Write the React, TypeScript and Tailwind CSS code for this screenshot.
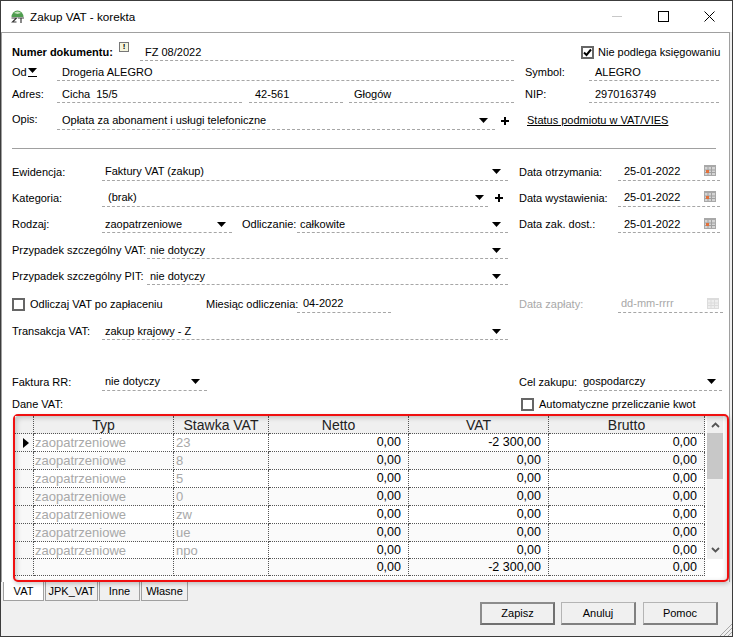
import React from "react";

const Arrow = ({ className = "" }: { className?: string }) => (
  <svg width="9" height="5" viewBox="0 0 9 5" className={"shrink-0 " + className}>
    <path d="M0 0H9L4.5 5Z" fill="#000" />
  </svg>
);

const Plus = () => (
  <svg width="8" height="8" viewBox="0 0 8 8" className="shrink-0">
    <path d="M3 0H5V3H8V5H5V8H3V5H0V3H3Z" fill="#000" />
  </svg>
);

const Cal = ({ off = false }: { off?: boolean }) => (
  <svg width="12" height="11" viewBox="0 0 12 11" className="shrink-0">
    <rect width="12" height="11" fill={off ? "#dcdcdc" : "#a8a8a8"} />
    <rect x="1" y="2" width="10" height="8" fill={off ? "#eeeeee" : "#d4d4d4"} />
    <path d="M1 5H11M1 7.5H11M4 2V10M7.5 2V10" stroke={off ? "#dcdcdc" : "#a0a0a0"} strokeWidth="1" />
    {!off && <rect x="2" y="5" width="3" height="3" fill="#e2703a" />}
  </svg>
);

const Check = ({ on = false }: { on?: boolean }) => (
  <span className="w-[13px] h-[13px] border-2 border-[#666666] bg-white flex items-center justify-center shrink-0">
    {on && (
      <svg width="9" height="9" viewBox="0 0 9 9">
        <path d="M1 4.5L3.5 7L8 1.5" stroke="#000" strokeWidth="2" fill="none" />
      </svg>
    )}
  </span>
);

const Field = ({
  w,
  children,
  arrow,
  pl = 0,
  mr = 7,
  cls = "",
  extra,
}: {
  w: number;
  children?: React.ReactNode;
  arrow?: boolean;
  pl?: number;
  mr?: number;
  cls?: string;
  extra?: React.ReactNode;
}) => (
  <div
    className={"relative self-stretch border-b border-dashed border-[#a6a6a6] flex items-center shrink-0 whitespace-pre " + cls}
    style={{ width: w, paddingLeft: pl }}
  >
    <span className="flex-1">{children}</span>
    {arrow && <Arrow />}
    {arrow && <span className="shrink-0" style={{ width: mr }} />}
    {extra}
  </div>
);

const DateCal = () => (
  <span className="absolute right-[4px] top-[2px]">
    <Cal />
  </span>
);

const Lbl = ({ w, children, cls = "" }: { w: number; children: React.ReactNode; cls?: string }) => (
  <span className={"shrink-0 whitespace-nowrap " + cls} style={{ width: w }}>
    {children}
  </span>
);

const rates = ["23", "8", "5", "0", "zw", "ue", "npo", ""];
const cols = "grid-cols-[19px_140px_95px_140px_140px_156px]";

const Row = ({ r, i }: { r: string; i: number }) => {
  const cell =
    "border-r border-b border-dotted border-[#555555] flex items-center " + (i >= 6 ? "h-[17px]" : "h-[18px]");
  const last = i === 7;
  return (
    <div className={"grid " + cols + " " + (i % 2 === 1 ? "bg-[#fafafa]" : "bg-white")}>
      <div className={cell + " justify-center pl-[3px] bg-[#f8f8f8]"}>
        {i === 0 && (
          <svg width="6" height="10" viewBox="0 0 6 10">
            <path d="M0 0L6 5L0 10Z" fill="#000" />
          </svg>
        )}
      </div>
      <div className={cell + " pl-[1px] text-[#a8a8a8] text-[13px]"}>{last ? "" : "zaopatrzeniowe"}</div>
      <div className={cell + " pl-[2px] text-[#a8a8a8] text-[13px]"}>{r}</div>
      <div className={cell + " justify-end pr-[7px]"}>0,00</div>
      <div className={cell + " justify-end pr-[7px]"}>{i === 0 || last ? "-2 300,00" : "0,00"}</div>
      <div className={cell + " justify-end pr-[7px]"}>0,00</div>
    </div>
  );
};

export default function App() {
  return (
    <div className="relative w-[733px] h-[637px] bg-[#f0f0f0] border border-[#3c3c3c] flex flex-col overflow-hidden text-[11px] leading-none text-black [font-family:'Liberation_Sans',sans-serif]">
      <div className="h-[31px] shrink-0 bg-white flex items-center pl-[9px] text-[11.7px]">
        <svg width="15" height="15" viewBox="0 0 15 15" className="shrink-0">
          <path d="M1.5 8A6 6.5 0 0 1 13.5 8Z" fill="#4f9d4f" />
          <path d="M4 4A4 3 0 0 1 11 4L7.5 5Z" fill="#c4e2bc" />
          <path d="M1.5 9H6.5L2.5 13H6.5M8 9H14M11 9V14" stroke="#3a3a3a" strokeWidth="1.2" fill="none" />
        </svg>
        <span className="ml-[5px]">Zakup VAT - korekta</span>
        <div className="ml-auto flex items-center">
          <div className="w-[46px] flex justify-center"><div className="w-[10px] h-px bg-[#c8c8c8]" /></div>
          <div className="w-[46px] flex justify-center"><div className="w-[11px] h-[11px] border border-black" /></div>
          <div className="w-[46px] flex justify-center">
            <svg width="11" height="11" viewBox="0 0 11 11"><path d="M.5.5L10.5 10.5M10.5.5L.5 10.5" stroke="#000" strokeWidth="1" /></svg>
          </div>
        </div>
      </div>

      <div className="h-[550px] w-[729px] shrink-0 bg-white border-t border-x border-[#a0a0a0] flex flex-col pl-[10px] pt-[11px]">
        <div className="flex h-[17px] items-center shrink-0">
          <span className="font-bold shrink-0 w-[107px] whitespace-nowrap">Numer dokumentu:</span>
          <span className="w-[10px] h-[10px] border border-[#777] bg-[#f4f4dc] text-[8px] font-bold flex items-center justify-center self-start -mt-[2px] shrink-0">!</span>
          <Field w={374} pl={5} cls="ml-[11px]">FZ 08/2022</Field>
          <div className="flex items-center gap-[4px] ml-[67px] whitespace-nowrap">
            <Check on />
            <span>Nie podlega księgowaniu</span>
          </div>
        </div>
        <div className="flex h-[17px] mt-[3px] items-center shrink-0">
          <span className="w-[45px] shrink-0 flex items-center">Od<span className="border-b border-black ml-px pb-[3px]"><Arrow /></span></span>
          <Field w={457} pl={5}>Drogeria ALEGRO</Field>
          <Lbl w={64} cls="ml-[11px]">Symbol:</Lbl>
          <Field w={130} pl={6}>ALEGRO</Field>
        </div>
        <div className="flex h-[17px] mt-[5px] items-center shrink-0">
          <Lbl w={45}>Adres:</Lbl>
          <Field w={185} pl={5}>{"Cicha  15/5"}</Field>
          <Field w={94} pl={6} cls="ml-[7px]">42-561</Field>
          <Field w={165} pl={5} cls="ml-[6px]">Głogów</Field>
          <Lbl w={64} cls="ml-[11px]">NIP:</Lbl>
          <Field w={130} pl={6}>2970163749</Field>
        </div>
        <div className="flex h-[19px] mt-[8px] items-center shrink-0">
          <Lbl w={45} cls="-mt-[3px]">Opis:</Lbl>
          <Field w={438} pl={5} arrow>Opłata za abonament i usługi telefoniczne</Field>
          <span className="ml-[6px] mr-[18px] flex"><Plus /></span>
          <span className="underline whitespace-nowrap">Status podmiotu w VAT/VIES</span>
        </div>
        <div className="h-px bg-[#a0a0a0] mt-[18px] w-[704px] shrink-0" />

        <div className="flex h-[18px] mt-[14px] items-center shrink-0">
          <Lbl w={90}>Ewidencja:</Lbl>
          <Field w={406} pl={3} arrow>Faktury VAT (zakup)</Field>
          <Lbl w={99} cls="ml-[11px]">Data otrzymania:</Lbl>
          <Field w={102} pl={6} extra={<DateCal />}>25-01-2022</Field>
        </div>
        <div className="flex h-[18px] mt-[8px] items-center shrink-0">
          <Lbl w={90}>Kategoria:</Lbl>
          <Field w={386} pl={6} arrow mr={4}>(brak)</Field>
          <span className="ml-[7px] mr-[16px] flex"><Plus /></span>
          <Lbl w={99}>Data wystawienia:</Lbl>
          <Field w={102} pl={6} extra={<DateCal />}>25-01-2022</Field>
        </div>
        <div className="flex h-[17px] mt-[9px] items-center shrink-0">
          <Lbl w={90}>Rodzaj:</Lbl>
          <Field w={130} pl={3} arrow mr={6}>zaopatrzeniowe</Field>
          <Lbl w={55} cls="ml-[10px]">Odliczanie:</Lbl>
          <Field w={211} pl={3} arrow>całkowite</Field>
          <Lbl w={99} cls="ml-[11px]">Data zak. dost.:</Lbl>
          <Field w={102} pl={6} extra={<DateCal />}>25-01-2022</Field>
        </div>
        <div className="flex h-[17px] mt-[9px] items-center shrink-0">
          <Lbl w={135}>Przypadek szczególny VAT:</Lbl>
          <Field w={361} pl={3} arrow>nie dotyczy</Field>
        </div>
        <div className="flex h-[17px] mt-[9px] items-center shrink-0">
          <Lbl w={135}>Przypadek szczególny PIT:</Lbl>
          <Field w={361} pl={3} arrow>nie dotyczy</Field>
        </div>
        <div className="flex h-[18px] mt-[10px] items-center shrink-0">
          <span className="w-[194px] shrink-0 flex items-center gap-[5px] whitespace-nowrap"><Check />Odliczaj VAT po zapłaceniu</span>
          <Lbl w={91}>Miesiąc odliczenia:</Lbl>
          <Field w={94} pl={6}>04-2022</Field>
          <Lbl w={99} cls="ml-[128px] text-[#a8a8a8]">Data zapłaty:</Lbl>
          <Field
            w={105}
            pl={3}
            cls="text-[#a8a8a8]"
            extra={<span className="absolute right-[4px] top-[3px]"><Cal off /></span>}
          >
            dd-mm-rrrr
          </Field>
        </div>
        <div className="flex h-[17px] mt-[10px] items-center shrink-0">
          <Lbl w={90}>Transakcja VAT:</Lbl>
          <Field w={406} pl={3} arrow>zakup krajowy - Z</Field>
        </div>
        <div className="flex h-[18px] mt-[33px] items-center shrink-0">
          <Lbl w={90}>Faktura RR:</Lbl>
          <Field w={105} pl={3} arrow>nie dotyczy</Field>
          <Lbl w={60} cls="ml-[312px]">Cel zakupu:</Lbl>
          <Field w={143} pl={4} arrow mr={6}>gospodarczy</Field>
        </div>
        <div className="flex h-[14px] mt-[6px] items-center shrink-0">
          <Lbl w={509}>Dane VAT:</Lbl>
          <span className="flex items-center gap-[5px] whitespace-nowrap"><Check />Automatyczne przeliczanie kwot</span>
        </div>

        <div className="relative w-[716px] h-[168px] ml-px mt-[3px] shrink-0 border-2 border-[#f01010] rounded-[5px] shadow-[1px_2px_4px_rgba(0,0,0,0.2)] text-[12.5px] flex bg-white">
          <div className="w-[690px] shrink-0">
            <div className={"grid " + cols + " bg-[#f0f0f0] text-[#222]"}>
              {["", "Typ", "Stawka VAT", "Netto", "VAT", "Brutto"].map((h, i) => (
                <div key={i} className="h-[18px] border-r border-b border-dotted border-[#555555] flex items-center justify-center text-[14px]">{h}</div>
              ))}
            </div>
            {rates.map((r, i) => (
              <Row key={i} r={r} i={i} />
            ))}
          </div>
          <div className="w-[16px] ml-[2px] flex flex-col h-[143px] bg-[#f0f0f0] items-center">
            <svg width="9" height="6" viewBox="0 0 9 6" className="mt-[6px]"><path d="M1 5L4.5 1.5L8 5" stroke="#555" strokeWidth="1.8" fill="none" /></svg>
            <div className="w-full h-[46px] bg-[#c8c8c8] mt-[5px]" />
            <svg width="9" height="6" viewBox="0 0 9 6" className="mt-auto mb-[6px]"><path d="M1 1L4.5 4.5L8 1" stroke="#555" strokeWidth="1.8" fill="none" /></svg>
          </div>
          <div className="absolute inset-0 rounded-[3px] pointer-events-none shadow-[inset_3px_3px_5px_-1px_rgba(0,0,0,0.18),inset_-3px_-1px_4px_-2px_rgba(0,0,0,0.15)]" />
        </div>
      </div>

      <div className="flex items-start pl-[2px] shrink-0">
        {[["VAT", 41, true], ["JPK_VAT", 53, false], ["Inne", 41, false], ["Własne", 47, false]].map(([t, w, on]) => (
          <div
            key={t as string}
            className={"h-[19px] border border-[#a0a0a0] border-t-0 flex items-center justify-center mr-[1px] " + (on ? "bg-white" : "bg-[#f0f0f0]")}
            style={{ width: w as number }}
          >
            {t as string}
          </div>
        ))}
      </div>

      <div className="flex justify-end pr-[14px] mt-px">
        <div className="w-[75px] h-[23px] border-2 border-[#707070] border-t-[#8c8c8c] border-l-[#8c8c8c] bg-[#f0f0f0] flex items-center justify-center">Zapisz</div>
        <div className="w-[75px] h-[23px] ml-[6px] border border-[#b4b4b4] border-b-2 border-r-2 border-b-[#808080] border-r-[#808080] bg-[#f0f0f0] flex items-center justify-center">Anuluj</div>
        <div className="w-[75px] h-[23px] ml-[7px] border border-[#b4b4b4] border-b-2 border-r-2 border-b-[#808080] border-r-[#808080] bg-[#f0f0f0] flex items-center justify-center">Pomoc</div>
      </div>

      <svg width="13" height="13" viewBox="0 0 13 13" className="absolute right-0 bottom-0">
        <path d="M1 13L13 1M5 13L13 5M9 13L13 9" stroke="#a8a8a8" strokeWidth="1" />
      </svg>
    </div>
  );
}
